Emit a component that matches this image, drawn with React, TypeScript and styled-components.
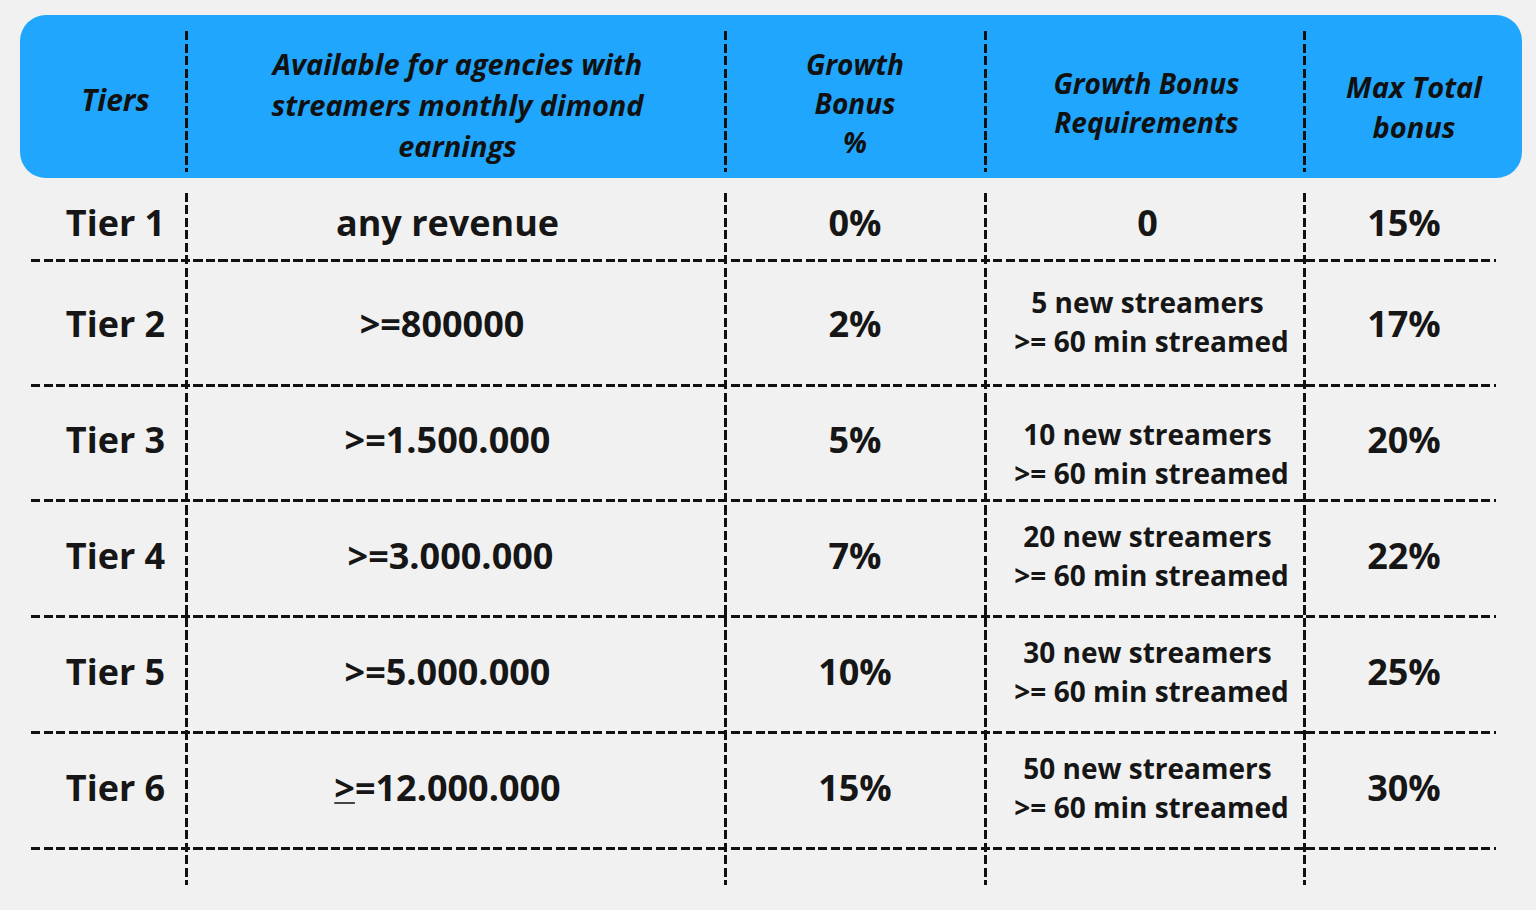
import styled, { createGlobalStyle } from "styled-components";

const GlobalStyle = createGlobalStyle`
  body {
    margin: 0;
    background: #f1f1f1;
    font-family: "Open Sans", "Noto Sans", sans-serif;
    color: #161616;
  }
`;

const COLS = "168px 539px 260px 319px 216px";
const INK = "#111";
const dashV = `repeating-linear-gradient(to bottom, ${INK} 0 9px, transparent 9px 12.5px)`;
const dashH = `repeating-linear-gradient(to right, ${INK} 0 9px, transparent 9px 12.5px)`;

const Page = styled.div`
  width: 1536px;
  height: 910px;
  box-sizing: border-box;
  padding: 15px 14px 0 20px;
`;

const Header = styled.div`
  display: grid;
  grid-template-columns: ${COLS};
  height: 163px;
  background: #20a6fc;
  border-radius: 26px;
`;

const HeadCell = styled.div<{ $divider?: boolean; $size: number; $lh: number; $top: number; $dx?: number }>`
  display: flex;
  align-items: center;
  justify-content: center;
  text-align: center;
  box-sizing: border-box;
  padding-top: ${(p) => p.$top}px;
  padding-left: ${(p) => Math.max(p.$dx ?? 0, 0)}px;
  padding-right: ${(p) => Math.max(-(p.$dx ?? 0), 0)}px;
  font-size: ${(p) => p.$size}px;
  line-height: ${(p) => p.$lh}px;
  font-weight: 700;
  font-style: italic;
  color: ${INK};
  background-image: ${(p) => (p.$divider ? dashV : "none")};
  background-repeat: no-repeat;
  background-size: 3px 141px;
  background-position: right 0 top 16px;
`;

const Body = styled.div`
  margin-top: 15px;
  padding-bottom: 35px;
  background-image: ${dashV}, ${dashV}, ${dashV}, ${dashV};
  background-size: 3px 100%;
  background-repeat: no-repeat;
  background-position: 165px 0, 704px 0, 964px 0, 1283px 0;
`;

const Row = styled.div<{ $h: number }>`
  display: grid;
  grid-template-columns: ${COLS};
  height: ${(p) => p.$h}px;
  box-sizing: border-box;
  padding-bottom: 3px;
  background: ${dashH} no-repeat 11px 100% / 1465px 3px;

  & > :nth-child(1) {
    padding-left: 23px;
  }
  & > :nth-child(3) {
    padding-right: 4px;
  }
  & > :nth-child(4) {
    padding-left: 2px;
  }
  & > :nth-child(5) {
    padding-right: 20px;
  }
`;

const Cell = styled.div<{ $dy?: number; $dx?: number }>`
  display: flex;
  flex-direction: column;
  align-items: center;
  justify-content: center;
  text-align: center;
  box-sizing: border-box;
  padding-top: ${(p) => Math.max(p.$dy ?? 0, 0)}px;
  padding-bottom: ${(p) => 6 + Math.max(-(p.$dy ?? 0), 0)}px;
  font-size: 36px;
  line-height: 44px;
  font-weight: 700;
  white-space: nowrap;
`;

const EarnCell = styled(Cell)`
  padding-right: ${(p) => 20 - (p.$dx ?? 0)}px;
`;

const ReqLine = styled.span`
  font-size: 28px;
  line-height: 39px;

  & + & {
    padding-left: 8px;
  }
`;

const Under = styled.span`
  text-decoration: underline;
  text-decoration-thickness: 1.5px;
  text-underline-offset: 1px;
  text-decoration-color: #444;
`;

type Tier = {
  tier: string;
  earn: React.ReactNode;
  earnDx?: number;
  pct: string;
  req: string[];
  max: string;
  h: number;
  dy?: number;
  reqDy?: number;
};

const rows: Tier[] = [
  { tier: "Tier 1", earn: "any revenue", pct: "0%", req: [], max: "15%", h: 69 },
  {
    tier: "Tier 2",
    earn: ">=800000",
    earnDx: -11,
    pct: "2%",
    req: ["5 new streamers", ">= 60 min streamed"],
    max: "17%",
    h: 125,
    dy: 8,
    reqDy: 4,
  },
  { tier: "Tier 3", earn: ">=1.500.000", pct: "5%", req: ["10 new streamers", ">= 60 min streamed"], max: "20%", h: 115, reqDy: 28 },
  { tier: "Tier 4", earn: ">=3.000.000", earnDx: 6, pct: "7%", req: ["20 new streamers", ">= 60 min streamed"], max: "22%", h: 116 },
  { tier: "Tier 5", earn: ">=5.000.000", pct: "10%", req: ["30 new streamers", ">= 60 min streamed"], max: "25%", h: 116 },
  {
    tier: "Tier 6",
    earn: (
      <span>
        <Under>&gt;</Under>=12.000.000
      </span>
    ),
    pct: "15%",
    req: ["50 new streamers", ">= 60 min streamed"],
    max: "30%",
    h: 116,
  },
];

export default function App() {
  return (
    <Page>
      <GlobalStyle />
      <Header>
        <HeadCell $divider $size={30} $lh={40} $top={7} $dx={23}>
          Tiers
        </HeadCell>
        <HeadCell $divider $size={29} $lh={41} $top={16}>
          Available for agencies with
          <br />
          streamers monthly dimond
          <br />
          earnings
        </HeadCell>
        <HeadCell $divider $size={28} $lh={39} $top={14} $dx={-4}>
          Growth
          <br />
          Bonus
          <br />%
        </HeadCell>
        <HeadCell $divider $size={28} $lh={39} $top={12}>
          Growth Bonus
          <br />
          Requirements
        </HeadCell>
        <HeadCell $size={29} $lh={40} $top={20}>
          Max Total
          <br />
          bonus
        </HeadCell>
      </Header>
      <Body>
        {rows.map((r) => (
          <Row key={r.tier} $h={r.h}>
            <Cell $dy={r.dy}>{r.tier}</Cell>
            <EarnCell $dy={r.dy} $dx={r.earnDx}>
              {r.earn}
            </EarnCell>
            <Cell $dy={r.dy}>{r.pct}</Cell>
            <Cell $dy={r.reqDy ?? r.dy}>
              {r.req.length === 0
                ? "0"
                : r.req.map((line) => <ReqLine key={line}>{line}</ReqLine>)}
            </Cell>
            <Cell $dy={r.dy}>{r.max}</Cell>
          </Row>
        ))}
      </Body>
    </Page>
  );
}
